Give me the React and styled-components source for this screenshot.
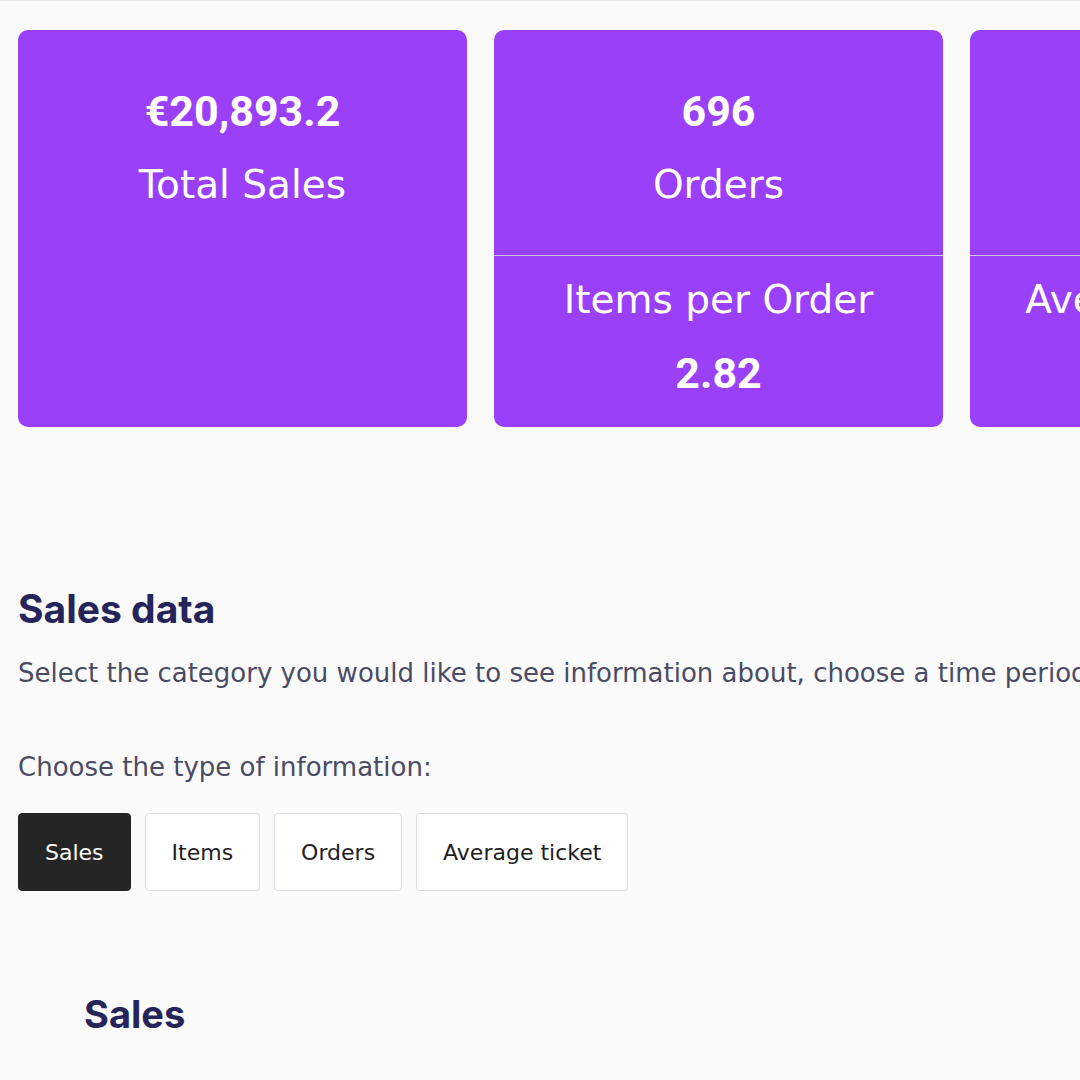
import styled, { createGlobalStyle } from "styled-components";

const GlobalStyle = createGlobalStyle`
  html, body {
    margin: 0;
    padding: 0;
    background: #fafafa;
    overflow: hidden;
  }
  * {
    box-sizing: border-box;
  }
`;

const cards = [
  { value: "€20,893.2", label: "Total Sales" },
  {
    value: "696",
    label: "Orders",
    subLabel: "Items per Order",
    subValue: "2.82",
  },
  {
    value: "1,963",
    label: "Items",
    subLabel: "Average per Item",
    subValue: "€10.64",
  },
];

const tabs = ["Sales", "Items", "Orders", "Average ticket"];

const App = () => {
  return (
    <Page>
      <GlobalStyle />
      <CardRow>
        {cards.map((card) => (
          <Card key={card.label}>
            <CardTop $split={!!card.subLabel}>
              <Value>{card.value}</Value>
              <Label>{card.label}</Label>
            </CardTop>
            {card.subLabel && (
              <CardBottom>
                <Label>{card.subLabel}</Label>
                <Value>{card.subValue}</Value>
              </CardBottom>
            )}
          </Card>
        ))}
      </CardRow>

      <Section>
        <Heading>Sales data</Heading>
        <Intro>
          Select the category you would like to see information about, choose a
          time period and compare results.
        </Intro>
        <Prompt>Choose the type of information:</Prompt>
        <Tabs>
          {tabs.map((tab, i) => (
            <Tab key={tab} $active={i === 0}>
              {tab}
            </Tab>
          ))}
        </Tabs>
        <ChartTitle>Sales</ChartTitle>
      </Section>
    </Page>
  );
};

// styled components

const Page = styled.div`
  width: 1080px;
  height: 1080px;
  overflow: hidden;
  padding: 29px 0 0 18px;
  border-top: 1px solid #e6e6e6;
  font-family: "DejaVu Sans", "Open Sans", sans-serif;
`;

const CardRow = styled.div`
  display: flex;
  gap: 27px;
  width: max-content;
`;

const Card = styled.div`
  flex: 0 0 449px;
  height: 397px;
  border-radius: 10px;
  background: #9a40f8;
  color: #ffffff;
  display: flex;
  flex-direction: column;
  overflow: hidden;
`;

const CardTop = styled.div`
  height: 226px;
  padding-top: 58px;
  display: flex;
  flex-direction: column;
  align-items: center;
  gap: 28px;
  border-bottom: 1px solid ${(p) => (p.$split ? "#cdc6e8" : "transparent")};
`;

const CardBottom = styled.div`
  flex: 1;
  padding-top: 21px;
  display: flex;
  flex-direction: column;
  align-items: center;
  gap: 27px;
`;

const Value = styled.div`
  font-family: Roboto, "Liberation Sans", sans-serif;
  font-weight: 700;
  font-size: 43px;
  line-height: 46px;
`;

const Label = styled.div`
  font-size: 39px;
  line-height: 46px;
  white-space: nowrap;
`;

const Section = styled.div`
  display: flex;
  flex-direction: column;
  align-items: flex-start;
`;

const Heading = styled.h2`
  margin: 159px 0 0;
  font-family: Inter, "Noto Sans", sans-serif;
  font-weight: 700;
  font-size: 39px;
  line-height: 46px;
  color: #26255a;
`;

const Intro = styled.p`
  margin: 21px 0 0;
  font-size: 26px;
  line-height: 40px;
  color: #4b4b63;
  white-space: nowrap;
`;

const Prompt = styled.p`
  margin: 54px 0 0;
  font-size: 26px;
  line-height: 40px;
  color: #4b4b63;
`;

const Tabs = styled.div`
  margin-top: 26px;
  display: flex;
  gap: 14px;
`;

const Tab = styled.button`
  height: 78px;
  padding: 0 26px;
  border-radius: 4px;
  border: 1px solid ${(p) => (p.$active ? "#252525" : "#dcdce4")};
  background: ${(p) => (p.$active ? "#252525" : "#ffffff")};
  color: ${(p) => (p.$active ? "#ffffff" : "#1e1e1e")};
  font-family: "DejaVu Sans", "Open Sans", sans-serif;
  font-size: 22px;
`;

const ChartTitle = styled.h2`
  margin: 100px 0 0 66px;
  font-family: Inter, "Noto Sans", sans-serif;
  font-weight: 700;
  font-size: 38px;
  line-height: 46px;
  color: #26255a;
`;

export default App;
